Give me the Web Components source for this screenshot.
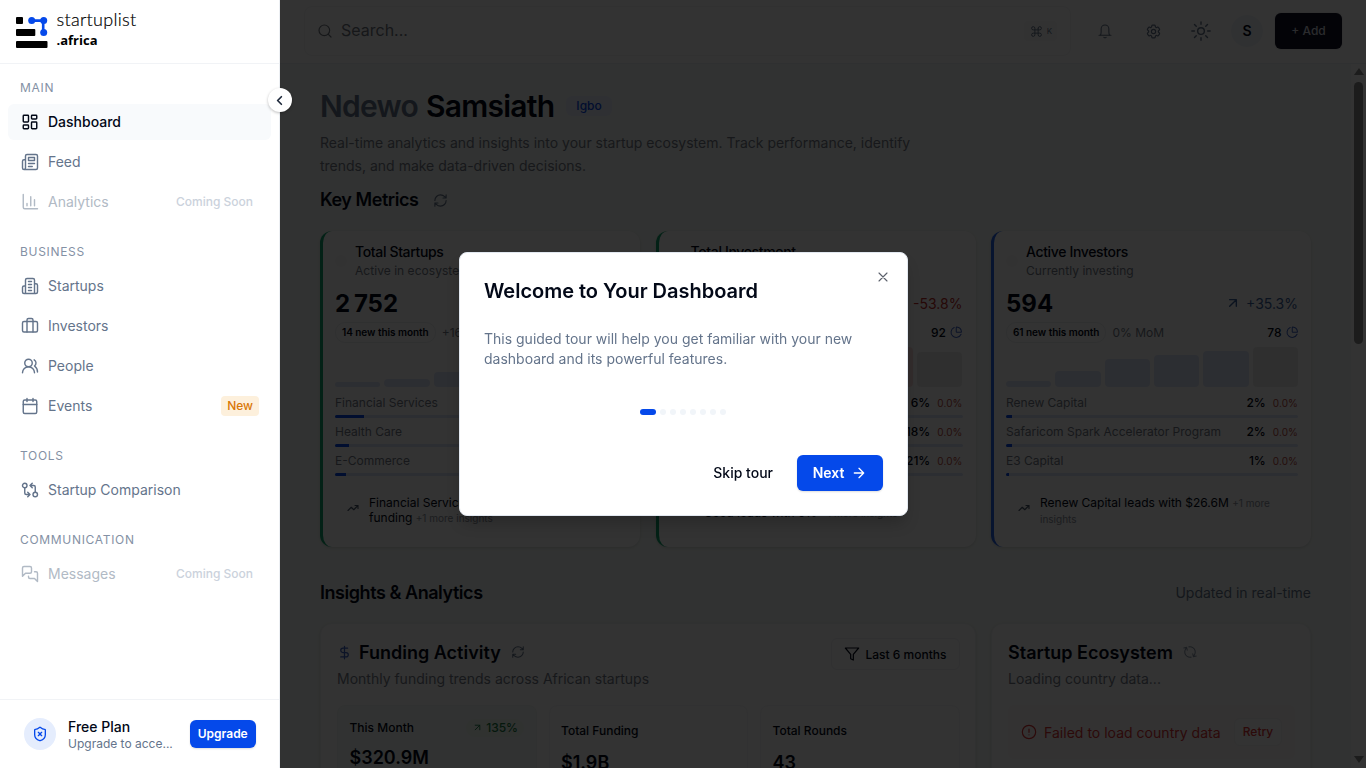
<!DOCTYPE html>
<html lang="en">
<head>
<meta charset="utf-8">
<title>Startuplist Africa – Dashboard</title>
<style>
html,body{margin:0;height:100%;overflow:hidden}
body{font-family:Inter,sans-serif;color:#020817;background:#f5faf7}
</style>
</head>
<body>
<dashboard-app></dashboard-app>
<script>
const ICONS={
dashboard:'<rect width="7" height="9" x="3" y="3" rx="1"/><rect width="7" height="5" x="14" y="3" rx="1"/><rect width="7" height="9" x="14" y="12" rx="1"/><rect width="7" height="5" x="3" y="16" rx="1"/>',
feed:'<path d="M4 22h16a2 2 0 0 0 2-2V4a2 2 0 0 0-2-2H8a2 2 0 0 0-2 2v16a2 2 0 0 1-2 2Zm0 0a2 2 0 0 1-2-2v-9c0-1.1.9-2 2-2h2"/><path d="M18 14h-8M15 18h-5M10 6h8v4h-8V6Z"/>',
chart:'<path d="M3 2v17a2 2 0 0 0 2 2h17M18 17V9M13 17V5M8 17v-3"/>',
building:'<path d="M6 22V4a2 2 0 0 1 2-2h8a2 2 0 0 1 2 2v18ZM6 12H4a2 2 0 0 0-2 2v6a2 2 0 0 0 2 2h2M18 9h2a2 2 0 0 1 2 2v9a2 2 0 0 1-2 2h-2M10 6h4M10 10h4M10 14h4M10 18h4"/>',
briefcase:'<path d="M16 20V4a2 2 0 0 0-2-2h-4a2 2 0 0 0-2 2v16"/><rect width="20" height="14" x="2" y="6" rx="2"/>',
people:'<path d="M18 21a8 8 0 0 0-16 0"/><circle cx="10" cy="8" r="5"/><path d="M22 20c0-3.37-2-6.5-4-8a5 5 0 0 0-.45-8.3"/>',
calendar:'<path d="M8 2v4M16 2v4M3 10h18"/><rect width="18" height="18" x="3" y="4" rx="2"/>',
compare:'<circle cx="5" cy="6" r="3"/><path d="M12 6h5a2 2 0 0 1 2 2v7M15 9l-3-3 3-3"/><circle cx="19" cy="18" r="3"/><path d="M12 18H7a2 2 0 0 1-2-2V9M9 15l3 3-3 3"/>',
messages:'<path d="M14 9a2 2 0 0 1-2 2H6l-4 4V4a2 2 0 0 1 2-2h8a2 2 0 0 1 2 2zM18 9h2a2 2 0 0 1 2 2v11l-4-4h-6a2 2 0 0 1-2-2v-1"/>',
shield:'<path d="M20 13c0 5-3.5 7.5-7.66 8.95a1 1 0 0 1-.67-.01C7.5 20.5 4 18 4 13V6a1 1 0 0 1 1-1c2 0 4.5-1.2 6.24-2.72a1.17 1.17 0 0 1 1.52 0C14.51 3.81 17 5 19 5a1 1 0 0 1 1 1zM14.5 9.5l-5 5M9.5 9.5l5 5"/>',
left:'<path d="m15 18-6-6 6-6"/>',
search:'<circle cx="11" cy="11" r="8"/><path d="m21 21-4.3-4.3"/>',
command:'<path d="M15 6v12a3 3 0 1 0 3-3H6a3 3 0 1 0 3 3V6a3 3 0 1 0-3 3h12a3 3 0 1 0-3-3"/>',
bell:'<path d="M3 18.5h18M5 18.5c1-1.5 1.2-3 1.2-5V8.8a5.8 5.8 0 0 1 11.6 0v4.7c0 2 .2 3.500 1.200 5M10.300 21.500q1.700 1.200 3.400 0"/>',
gear:'<path d="M9.594 3.940c.090-.542.560-.940 1.110-.940h2.593c.550 0 1.020.398 1.110.940l.213 1.281c.063.374.313.686.645.870.074.040.147.083.220.127.325.196.720.257 1.075.124l1.217-.456a1.125 1.125 0 0 1 1.370.490l1.296 2.247a1.125 1.125 0 0 1-.260 1.431l-1.003.827c-.293.241-.438.613-.430.992v.255c-.008.378.137.750.430.991l1.004.827c.424.350.534.955.260 1.430l-1.298 2.247a1.125 1.125 0 0 1-1.369.491l-1.217-.456c-.355-.133-.750-.072-1.076.124-.072.044-.146.086-.220.128-.331.183-.581.495-.644.869l-.213 1.281c-.090.543-.560.940-1.110.940h-2.594c-.550 0-1.019-.398-1.110-.940l-.213-1.281c-.062-.374-.312-.686-.644-.870-.074-.040-.147-.083-.220-.127-.325-.196-.720-.257-1.076-.124l-1.217.456a1.125 1.125 0 0 1-1.369-.490l-1.297-2.247a1.125 1.125 0 0 1 .260-1.431l1.004-.827c.292-.240.437-.613.430-.991v-.255c.007-.380-.138-.751-.430-.992l-1.004-.827a1.125 1.125 0 0 1-.260-1.430l1.297-2.247a1.125 1.125 0 0 1 1.370-.491l1.216.456c.356.133.751.072 1.076-.124.072-.044.146-.086.220-.128.332-.183.582-.495.644-.869z"/><circle cx="12" cy="12" r="3"/>',
sun:'<circle cx="12" cy="12" r="4"/><path d="M12 1v3M12 20v3M4.200 4.200l2.100 2.100M17.700 17.700l2.100 2.100M1 12h3M20 12h3M6.300 17.700l-2.100 2.100M19.800 4.200l-2.100 2.100"/>',
refresh:'<path d="M3 12a9 9 0 0 1 9-9 9.750 9.750 0 0 1 6.740 2.740L21 8M21 3v5h-5M21 12a9 9 0 0 1-9 9 9.750 9.750 0 0 1-6.740-2.740L3 16M8 16H3v5"/>',
upright:'<path d="M7 7h10v10M7 17 17 7"/>',
pie:'<path d="M21 12c.552 0 1.005-.449.950-.998a10 10 0 0 0-8.953-8.951c-.550-.055-.998.398-.998.950v8a1 1 0 0 0 1 1zM21.210 15.890A10 10 0 1 1 8 2.830"/>',
trend:'<path d="M22 7 13.500 15.500l-5-5L2 17M16 7h6v6"/>',
dollar:'<path d="M12 2v20M17 5H9.500a3.500 3.500 0 0 0 0 7h5a3.500 3.500 0 0 1 0 7H6"/>',
filter:'<path d="M22 3H2l8 9.460V19l4 2v-8.540z"/>',
alert:'<circle cx="12" cy="12" r="10"/><path d="M12 7.500v5M12 16.200h.01"/>',
close:'<path d="M18 6 6 18M6 6l12 12"/>',
right:'<path d="M5 12h14M12 5l7 7-7 7"/>'
};
function define(name,css,html){
  customElements.define(name,class extends HTMLElement{
    connectedCallback(){
      if(this.shadowRoot)return;
      const t=document.createElement('template');
      t.innerHTML='<style>*{box-sizing:border-box}:host{display:block;box-sizing:border-box}'+css+'</style>'+(typeof html==='function'?html(this):html);
      this.attachShadow({mode:'open'}).append(t.content.cloneNode(true));
    }
  });
}
const at=(e,n,d='')=>e.getAttribute(n)??d;

define('ui-icon',':host{display:inline-flex;flex:none}svg{display:block;fill:none;stroke:currentColor;stroke-linecap:round;stroke-linejoin:round}',
 e=>{const s=at(e,'size','18');return `<svg width="${s}" height="${s}" viewBox="0 0 24 24" stroke-width="${at(e,'weight','2')}">${ICONS[at(e,'name')]}</svg>`});

define('brand-logo',`:host{display:flex;height:64px;padding:11px 16px 0;border-bottom:1px solid #f1f3f6;color:#000}
.words{margin-left:8.500px;margin-top:-2px;font-family:Lato,sans-serif}
.a{font-size:18px;font-weight:300;line-height:21px;letter-spacing:.3px;-webkit-text-stroke:.2px #000}.b{font-family:"Open Sans";font-weight:700;font-size:13px;line-height:20px}`,
`<svg width="32" height="40" viewBox="0 0 32 40"><g fill="#000"><rect y="6" width="7" height="7" rx="1"/><rect y="18" width="19.300" height="7" rx="1"/><rect y="30" width="31.500" height="7" rx="1"/></g><g fill="#0549ea"><path d="M15 8.200h13.500v12h-2.600V11H15z"/><circle cx="15.700" cy="9.500" r="3.500"/><circle cx="27.700" cy="9.500" r="3.500"/><circle cx="27.700" cy="21.500" r="3.500"/></g></svg>
<div class="words"><div class="a">startuplist</div><div class="b">.africa</div></div>`);

define('nav-item',`:host{display:flex;align-items:center;height:36px;margin:0 8px 4px;padding:0 12px;border-radius:6px;color:#64748b;font-size:14px}
:host([active]){background:#f8fafc;color:#020817}:host([soon]){color:#b1bac5}
.ic{width:20px;margin-right:8px;display:flex;justify-content:center}.l{flex:1;padding-bottom:2px}
.soon{font-size:12px;font-weight:500;color:#cbd2dc;margin-right:6px;padding-bottom:2px}
.new{font-size:12px;font-weight:500;color:#d97706;background:#fdf0dc;border-radius:4px;height:20px;line-height:20px;padding:0 6px}
:host([active]) .l{font-weight:450}`,
e=>`<span class="ic"><ui-icon name="${at(e,'icon')}" weight="1.9"></ui-icon></span><span class="l"><slot></slot></span>${e.hasAttribute('soon')?'<span class="soon">Coming Soon</span>':''}${e.hasAttribute('new')?'<span class="new">New</span>':''}`);

define('nav-section',`.t{padding:0 20px;height:16px;line-height:16px;font-size:12px;font-weight:400;letter-spacing:.68px;color:#8491a5;margin-bottom:8px;text-transform:uppercase}`,
e=>`<div class="t">${at(e,'label')}</div><slot></slot>`);

define('plan-footer',`:host{display:flex;align-items:center;height:69px;border-top:1px solid #f1f3f6;padding:0 23px 0 24px}
.i{width:32px;height:32px;border-radius:50%;background:#e5edfd;color:#0549ea;display:grid;place-items:center;margin-right:12px;flex:none}
.w{width:106px;flex:none;margin-right:16px;padding-top:1px}.n{font-size:14px;font-weight:500;line-height:17px;margin-bottom:1px}.s{font-size:12px;line-height:16px;color:#64748b;white-space:nowrap;overflow:hidden;text-overflow:ellipsis}
b{font-weight:600;font-size:12px;color:#fff;background:#0549ea;border-radius:6px;width:65.500px;flex:none;height:28px;line-height:28px;text-align:center;box-shadow:0 1px 2px #0002}`,
`<span class="i"><ui-icon name="shield" size="16" weight="2"></ui-icon></span><div class="w"><div class="n">Free Plan</div><div class="s">Upgrade to acce...</div></div><b>Upgrade</b>`);

define('side-bar',`:host{position:relative;z-index:50;width:280px;flex:none;display:flex;flex-direction:column;height:768px;background:#fff;border-right:1px solid #eceff3}
nav{flex:1;padding-top:16px}
nav-section{margin-bottom:24px}
.c{position:absolute;left:267.500px;top:88px;width:24px;height:24px;border-radius:50%;background:#fff;box-shadow:0 1px 3px #0004;display:grid;place-items:center;color:#1e293b;padding-right:1px}`,
`<brand-logo></brand-logo><nav>
<nav-section label="Main"><nav-item icon="dashboard" active>Dashboard</nav-item><nav-item icon="feed">Feed</nav-item><nav-item icon="chart" soon>Analytics</nav-item></nav-section>
<nav-section label="Business"><nav-item icon="building">Startups</nav-item><nav-item icon="briefcase">Investors</nav-item><nav-item icon="people">People</nav-item><nav-item icon="calendar" new>Events</nav-item></nav-section>
<nav-section label="Tools"><nav-item icon="compare">Startup Comparison</nav-item></nav-section>
<nav-section label="Communication"><nav-item icon="messages" soon>Messages</nav-item></nav-section>
</nav><plan-footer></plan-footer><span class="c"><ui-icon name="left" size="15" weight="2.7"></ui-icon></span>`);

define('top-bar',`:host{display:flex;align-items:center;height:64px;padding:0 24px 1px;background:#fff;border-bottom:1px solid #eceff3;color:#64748b}
.s{width:768px;height:50px;border:1px solid #f3f4f6;border-radius:8px;display:flex;align-items:center;padding:0 13px 0 12px;font-size:16px;color:#71767f;margin-right:14px}
.s span{flex:1;margin-left:8px;padding-bottom:2px}.k{display:flex;align-items:center;gap:4px;height:20px;padding:0 5px 0 6px;border-radius:4px;background:#fafafa;font-size:8px;color:#64748b}
.b{width:40px;height:40px;display:grid;place-items:center;margin-right:8px}
.a{width:32px;height:32px;border-radius:50%;background:#f1f5fb;color:#020817;display:grid;place-items:center;font-size:14px;font-weight:600;margin:0 12px 0 2px;padding-bottom:1px}
.add{width:67px;height:36px;border-radius:6px;background:#0f0f24;color:#d5d8e0;text-align:center;line-height:35px;font-size:12px;font-weight:500;box-shadow:0 0 2px #0003}`,
`<div class="s"><ui-icon name="search" size="16" weight="1.8"></ui-icon><span>Search...</span><div class="k"><ui-icon name="command" size="13" weight="1.8"></ui-icon>K</div></div>
<div class="b"><ui-icon name="bell" size="16" weight="1.6"></ui-icon></div><div class="b"><ui-icon name="gear" size="17" weight="1.7"></ui-icon></div><div class="b"><ui-icon name="sun" size="20" weight="1.7"></ui-icon></div><div class="a">S</div><div class="add">+ Add</div>`);

define('page-heading',`h1{margin:-1px 0 0;font-size:30px;line-height:36px;font-weight:600;letter-spacing:-.75px;display:flex;align-items:center}
h1 i{font-style:normal;color:#64748b;margin-right:8px}.b{margin-left:12px;font-size:12px;font-weight:500;letter-spacing:0;line-height:20px;padding:0 10px;border-radius:6px;background:#eaf0fe;color:#0549ea}
p{margin:8px 0 0;font-size:14px;line-height:22.750px;color:#747b87;width:640px}`,
`<h1><i>Ndewo</i>Samsiath<span class="b">Igbo</span></h1><p>Real-time analytics and insights into your startup ecosystem. Track performance, identify<br>trends, and make data-driven decisions.</p>`);

define('section-title',`:host{display:flex;align-items:center;height:28px;padding-bottom:2px;font-size:18px;font-weight:600;letter-spacing:-.45px}ui-icon{margin:2px 0 0 15px;color:#64748b}.r{margin-left:auto;font-size:14px;font-weight:400;letter-spacing:0;color:#64748b}`,
e=>`<slot></slot>${e.hasAttribute('refresh')?'<ui-icon name="refresh" size="15" weight="1.8"></ui-icon>':''}<span class="r">${at(e,'note')}</span>`);

define('metric-card',`:host{height:316px;background:#fff;border-left:3px solid var(--accent);border-radius:12px;padding:11px 13px 12px 12px;box-shadow:0 1px 3px #0002;min-width:0}
.h{display:flex;align-items:center;height:37px}.o{width:12px;height:12px;border-radius:50%;background:#fbfafa;margin-right:8px}.t{font-size:14px;line-height:20px;font-weight:500;letter-spacing:-.35px}.d{font-size:12px;line-height:17px;color:#747b87;letter-spacing:.04px}
.n{display:flex;align-items:center;height:32px;margin-top:8px;font-size:24px;font-weight:700}.g{margin-left:auto;font-size:14px;font-weight:400;display:flex;align-items:center;gap:5px;color:var(--g,#3b6199)}
.m{display:flex;align-items:center;height:21px;margin-top:3px;font-size:12px;color:#747b87}.p{font-size:10px;font-weight:600;color:#020817;border:1px solid #eceef1;border-radius:10px;line-height:19px;padding:0 6px;margin-right:6px;letter-spacing:-.04px;white-space:nowrap}.q{margin-left:auto;display:flex;align-items:center;gap:4px;color:#020817;font-weight:500}.q ui-icon{color:#3e63c4}
.bars{display:flex;gap:4px;align-items:flex-end;height:40px;margin-top:4px}.bars i{flex:1;border-radius:4px;background:var(--bar,#dde5f8)}.bars i:last-child{background:#ececec}
.rows{margin-top:8px}.row{height:29px}.row div{display:flex;font-size:12px;line-height:16px;color:#747b87}.row b{margin-left:auto;color:#020817;font-weight:500}.row em{font-style:normal;font-size:10px;color:#b64a3e;margin-left:7px;letter-spacing:.1px}.row u{display:block;margin-top:4px;height:3px;border-radius:2px;background:#dce5fa;overflow:hidden}.row u i{display:block;height:3px;background:#0549ea}
.ins{display:flex;height:46px;margin-top:6px;background:#fcfcfc;border-radius:8px;padding:7px 12px;font-size:12px;line-height:15px;color:#020817;letter-spacing:0}.ins ui-icon{margin:7px 10px 0 0;color:#475569}.ins small{font-size:10px;color:#8b919b}
:host([short]) .ins{height:38px;margin-top:14px;padding-top:9px}:host([short]) .ins ui-icon{margin-top:2px}`,
e=>{const rows=at(e,'rows').split(';').map(r=>r.split('|'));
return `<div class="h"><span class="o"></span><div><div class="t">${at(e,'label')}</div><div class="d">${at(e,'desc')}</div></div></div>
<div class="n">${at(e,'value')}<span class="g">${e.hasAttribute('up')?'<ui-icon name="upright" size="16" weight="2.1"></ui-icon>':''}${at(e,'growth')}</span></div>
<div class="m"><span class="p">${at(e,'badge')}</span>${at(e,'mom')}<span class="q">${at(e,'count')}<ui-icon name="pie" size="12.500" weight="2"></ui-icon></span></div>
<div class="bars">${at(e,'bars').split(',').map(h=>`<i style="height:${h}px"></i>`).join('')}</div>
<div class="rows">${rows.map(r=>`<div class="row"><div>${r[0]}<b>${r[1]}</b><em>0.0%</em></div><u><i style="width:${r[2]}%"></i></u></div>`).join('')}</div>
<div class="ins"><ui-icon name="trend" size="12" weight="2.200"></ui-icon><span><slot></slot> <small>+1 more insights</small></span></div>`});

define('panel-card',`:host{background:#fff;border:1px solid #f1f3f5;border-radius:12px;box-shadow:0 1px 3px #0002;padding:14px 15px 0 16px;height:220px;min-width:0}
.h{display:flex;align-items:center;height:28px;font-size:18px;font-weight:600}.h .r{margin-left:10px;color:#64748b}.d{font-size:14px;line-height:20px;color:#747b87;margin:3px 0 16px}
.h slot[name=action]{display:block;margin-left:auto}.dol{color:#3e63c4;margin-right:7px}:host([spin]) .r{transform:rotate(78deg);opacity:.75}`,
e=>`<div class="h">${e.hasAttribute('money')?'<ui-icon class="dol" name="dollar" size="15" weight="2"></ui-icon>':''}<span>${at(e,'label')}</span><ui-icon class="r" name="refresh" size="14" weight="1.8"></ui-icon><slot name="action"></slot></div><div class="d">${at(e,'desc')}</div><slot></slot>`);

define('range-button',`:host{margin-left:auto;display:flex;align-items:center;width:129px;height:32px;border:1px solid #eef0f3;border-radius:6px;font-size:12px;font-weight:500;padding-left:12px;gap:6px;margin-top:4px}`,`<ui-icon name="filter" size="16" weight="1.8"></ui-icon>Last 6 months`);

define('stat-row',`:host{display:grid;grid-template-columns:repeat(3,1fr);gap:12px}`,`<slot></slot>`);
define('stat-tile',`:host{height:130px;border:1px solid #f4f5f7;border-radius:8px;padding:16px 11.500px;background:#fcfcfc}:host([tone]){background:#f5faf7;border-color:#f0f6f3;padding-top:13px}
.l{display:flex;align-items:center;font-size:12px;font-weight:500;height:18px;padding-bottom:1px}.v{font-size:18px;font-weight:600;line-height:28px;margin-top:9px}:host([tone]) .v{margin-top:7px}
.g{margin-left:auto;display:flex;align-items:center;gap:3px;background:#edf8f0;color:#1b7a43;border-radius:9px;height:18px;padding:0 6px}`,
e=>`<div class="l"><slot></slot>${at(e,'growth')?`<span class="g"><ui-icon name="upright" size="11" weight="2"></ui-icon>${at(e,'growth')}</span>`:''}</div><div class="v">${at(e,'value')}</div>`);

define('error-note',`:host{display:flex;align-items:center;height:54px;background:#fcfafa;border-radius:6px;padding:0 13px;color:#dc3434;font-size:14px;letter-spacing:.02px;white-space:nowrap}ui-icon{margin-right:7px}span{margin-left:auto;width:48px;height:28px;border:1px solid #f3f2f3;border-radius:6px;text-align:center;line-height:26px;font-size:12px;font-weight:500;background:#fff}`,
`<ui-icon name="alert" size="16" weight="1.8"></ui-icon>Failed to load country data<span>Retry</span>`);

define('scroll-rail',`:host{width:15px;flex:none;display:flex;flex-direction:column;align-items:center;background:#fcfcfc;height:100%;padding-top:4px}.u,.n{width:0;height:0;border:5px solid transparent}.u{border-top:0;border-bottom:7px solid #8b8b8b}.n{border-bottom:0;border-top:7px solid #8b8b8b;margin:auto 0 5px}.t{width:9px;height:262px;margin-top:7px;border-radius:5px;background:#8b8b8b}`,`<div class="u"></div><div class="t"></div><div class="n"></div>`);

define('tour-dialog',`:host{width:448.500px;height:264px;background:#fff;border:1px solid #e2e8f0;border-radius:8px;padding:24px 23.500px 24px 24px;position:relative;box-shadow:0 10px 15px -3px #0003}
h2{margin:0;font-size:20px;line-height:28px;font-weight:600;letter-spacing:-.02px}p{margin:24px 0 0;font-size:14px;line-height:20px;color:#64748b}
.x{position:absolute;right:16px;top:16px;color:#5b606b}.dots{display:flex;justify-content:center;gap:4px;margin-top:40px;padding-right:1px}.dots i{width:6px;height:6px;border-radius:3px;background:#f1f5f9}.dots i:first-child{width:16px;background:#0549ea}
.f{display:flex;justify-content:flex-end;margin-top:40px;height:36px;align-items:center;font-size:14px;font-weight:500}.f>span:first-child{padding-bottom:1px}.n{margin-left:24px;width:86px;height:36px;background:#0549ea;color:#fff;border-radius:6px;display:flex;align-items:center;justify-content:center;gap:7px;font-weight:600;box-shadow:0 1px 2px #0002;padding-bottom:1px}`,
`<ui-icon class="x" name="close" size="16" weight="1.7"></ui-icon><h2>Welcome to Your Dashboard</h2><p>This guided tour will help you get familiar with your new<br>dashboard and its powerful features.</p><div class="dots">${'<i></i>'.repeat(8)}</div><div class="f"><span>Skip tour</span><span class="n">Next<ui-icon name="right" size="16" weight="2"></ui-icon></span></div>`);

define('dashboard-app',`:host{display:flex;width:1366px;height:768px;overflow:hidden}
.main{flex:1;min-width:0}.body{display:flex;height:704px;overflow:hidden}.content{flex:1;min-width:0;padding:25px 40px 0}
.g{display:grid;grid-template-columns:repeat(3,minmax(0,1fr));gap:15.500px}.wide{grid-column:span 2}
.veil{position:fixed;inset:0;background:rgba(0,0,0,.8);z-index:40}.modal{position:fixed;inset:0;z-index:60;display:flex;align-items:center;padding-left:459px}`,
`<side-bar></side-bar><div class="main"><top-bar></top-bar><div class="body"><div class="content">
<page-heading></page-heading>
<section-title refresh style="margin:8.500px 0 17px">Key Metrics</section-title>
<div class="g">
<metric-card style="--accent:#10a56f" label="Total Startups" desc="Active in ecosystem" value="2&#8239;752" growth="+16.7%" up badge="14 new this month" mom="+16.7% MoM" count="85" bars="5.500,8.500,15,24,30,36" rows="Financial Services|11%|10;Health Care|5%|4.800;E-Commerce|4%|3.800">Financial Services leads with 35% of<br>funding</metric-card>
<metric-card short style="--accent:#10a56f;--g:#bd2c28;--bar:#f7dcdc" label="Total Investment" desc="Funding raised" value="$1.9B" growth="-53.8%" badge="4 new this month" mom="0% MoM" count="92" bars="10,16,22,28,40,35" rows="Seed|6%|6;Series A|18%|18;Series B|21%|21">Seed leads with 6%</metric-card>
<metric-card style="--accent:#2563eb" label="Active Investors" desc="Currently investing" value="594" growth="+35.3%" up badge="61 new this month" mom="0% MoM" count="78" bars="6,16,28,32,36,40" rows="Renew Capital|2%|2;Safaricom Spark Accelerator Program|2%|2;E3 Capital|1%|1">Renew Capital leads with $26.6M</metric-card>
</div>
<section-title note="Updated in real-time" style="margin:32px 0 16px">Insights &amp; Analytics</section-title>
<div class="g">
<panel-card class="wide" money label="Funding Activity" desc="Monthly funding trends across African startups"><range-button slot="action"></range-button>
<stat-row><stat-tile tone growth="135%" value="$320.9M">This Month</stat-tile><stat-tile value="$1.9B">Total Funding</stat-tile><stat-tile value="43">Total Rounds</stat-tile></stat-row></panel-card>
<panel-card spin label="Startup Ecosystem" desc="Loading country data..."><error-note></error-note></panel-card>
</div></div><scroll-rail></scroll-rail></div></div>
<div class="veil"></div><div class="modal"><tour-dialog></tour-dialog></div>`);
</script>
</body>
</html>
